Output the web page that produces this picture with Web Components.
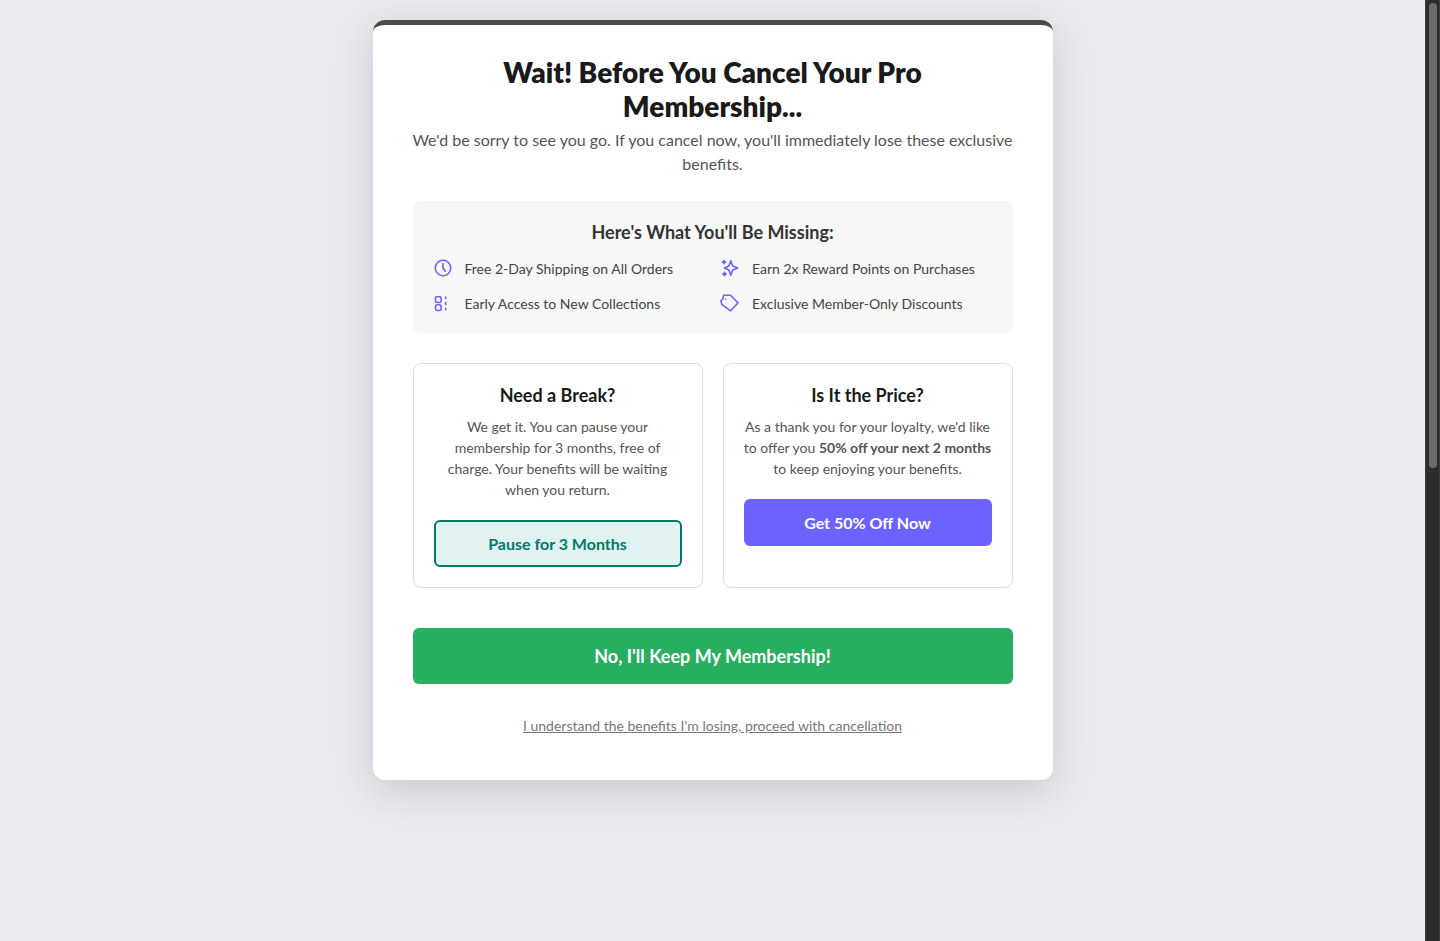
<!DOCTYPE html>
<html lang="en">
<head>
<meta charset="utf-8">
<meta name="viewport" content="width=device-width, initial-scale=1">
<title>Cancel Pro Membership</title>
<style>
  html, body { margin: 0; }
  body { background: #e9ebef; color: #4a4a4a; font-family: Lato, "Liberation Sans", sans-serif; font-size: 14px; }
</style>
</head>
<body>
<page-shell>
  <retention-dialog>
    <span slot="title">Wait! Before You Cancel Your Pro Membership...</span>
    <span slot="intro">We'd be sorry to see you go. If you cancel now, you'll immediately lose these exclusive benefits.</span>
    <benefit-panel heading="Here's What You'll Be Missing:">
      <benefit-item icon="clock">Free 2-Day Shipping on All Orders</benefit-item>
      <benefit-item icon="sparkles">Earn 2x Reward Points on Purchases</benefit-item>
      <benefit-item icon="access">Early Access to New Collections</benefit-item>
      <benefit-item icon="tag">Exclusive Member-Only Discounts</benefit-item>
    </benefit-panel>
    <offer-group>
      <offer-card heading="Need a Break?">
        We get it. You can pause your membership for 3 months, free of charge. Your benefits will be waiting when you return.
        <action-button slot="action" variant="pause">Pause for 3 Months</action-button>
      </offer-card>
      <offer-card heading="Is It the Price?">
        As a thank you for your loyalty, we'd like to offer you <strong>50% off your next 2 months</strong> to keep enjoying your benefits.
        <action-button slot="action" variant="discount">Get 50% Off Now</action-button>
      </offer-card>
    </offer-group>
    <action-button variant="keep">No, I'll Keep My Membership!</action-button>
    <cancel-link>I understand the benefits I'm losing, proceed with cancellation</cancel-link>
  </retention-dialog>
</page-shell>
<script>
  const define = (name, markup, setup) => {
    customElements.define(name, class extends HTMLElement {
      constructor() {
        super();
        const template = document.createElement('template');
        template.innerHTML = markup;
        this.attachShadow({ mode: 'open' }).append(template.content.cloneNode(true));
      }
      connectedCallback() { if (setup) setup(this, this.shadowRoot); }
    });
  };

  define('page-shell', `
    <style>
      :host { display: flex; min-height: 100vh; }
      main { flex: 1; min-width: 0; box-sizing: border-box; padding: 20px; display: flex; justify-content: center; align-items: flex-start; }
    </style>
    <main><slot></slot></main>
    <scroll-track></scroll-track>`);

  define('scroll-track', `
    <style>
      :host { display: block; box-sizing: border-box; width: 15px; height: 100vh; padding: 3px; position: sticky; top: 0; background: #2c2c2c; border: solid #3c3c3c; border-width: 0 1px; }
      div { box-sizing: border-box; width: 8px; height: calc(50% - 3px); border-radius: 4px; background: #6b6b6b; }
    </style>
    <div></div>`);

  define('retention-dialog', `
    <style>
      :host { display: block; box-sizing: border-box; width: 100%; max-width: 680px; padding: 30px 40px; text-align: center; background: #fff; border-top: 5px solid #4a4a4a; border-radius: 12px; box-shadow: 0 10px 40px rgba(0, 0, 0, 0.15); }
      h1 { margin: 0 0 5px; font-size: 28px; line-height: 34px; font-weight: 800; color: #1a1a1a; }
      p { margin: 0 -4px 25px; font-size: 16px; line-height: 24px; color: #555; }
    </style>
    <h1><slot name="title"></slot></h1>
    <p><slot name="intro"></slot></p>
    <slot></slot>`);

  define('benefit-panel', `
    <style>
      :host { display: block; padding: 20px; margin-bottom: 30px; background: #f7f7f7; border-radius: 8px; }
      h2 { margin: 0 0 15px; font-size: 18px; line-height: 22px; font-weight: 700; color: #333; }
      div { display: grid; grid-template-columns: 1fr 1fr; gap: 15px; }
    </style>
    <h2></h2>
    <div role="list"><slot></slot></div>`,
    (host, root) => { root.querySelector('h2').textContent = host.getAttribute('heading'); });

  const icons = {
    clock: '<circle cx="10" cy="10" r="7.7"/><path d="M10 5.8V10l2.4 3.2"/>',
    sparkles: '<path d="M10.8 2.8 12.7 8 17.8 10 12.7 12 10.8 17.2 8.9 12 4.5 10 8.9 8Z"/><path d="M4 2.6v3M2.5 4.1h3M4.5 14.5v3M3 16h3" stroke-width="1.9"/>',
    access: '<rect x="2.5" y="3.7" width="5.6" height="5.8" rx="1.2"/><rect x="2.5" y="11.7" width="5.6" height="5.8" rx="2"/><path d="M12.7 4v1.4M12.7 9.4v2M12.7 15.4v1.4"/>',
    tag: '<path d="M3.7 2.3H10.5L18 9.7 10.7 17.8 2 11.6 .8 8 2.8 6Z"/><path d="M5.5 6h.1"/>'
  };

  define('benefit-item', `
    <style>
      :host { display: flex; align-items: center; gap: 12px; text-align: left; line-height: 20px; color: #444; }
      svg { flex: none; width: 20px; height: 20px; fill: none; stroke: #6c63ff; stroke-width: 1.6; stroke-linecap: round; stroke-linejoin: round; overflow: visible; }
      span { padding-top: 2px; line-height: 18px; }
    </style>
    <svg viewBox="0 0 20 20" aria-hidden="true"></svg>
    <span><slot></slot></span>`,
    (host, root) => {
      host.setAttribute('role', 'listitem');
      root.querySelector('svg').innerHTML = icons[host.getAttribute('icon')];
    });

  define('offer-group', `
    <style>
      :host { display: grid; grid-template-columns: repeat(auto-fit, minmax(240px, 1fr)); gap: 20px; margin-bottom: 40px; }
    </style>
    <slot></slot>`);

  define('offer-card', `
    <style>
      :host { display: block; padding: 20px; border: 1px solid #ddd; border-radius: 8px; }
      h2 { margin: 0 0 10px; font-size: 18px; line-height: 22px; font-weight: 700; color: #1a1a1a; }
      p { margin: 0 0 20px; line-height: 21px; color: #555; }
    </style>
    <h2></h2>
    <p><slot></slot></p>
    <slot name="action"></slot>`,
    (host, root) => { root.querySelector('h2').textContent = host.getAttribute('heading'); });

  define('action-button', `
    <style>
      :host { display: block; }
      button { display: block; width: 100%; margin: 0; padding: 12px; border: 0; border-radius: 6px; font: 700 16px/23px Lato, "Liberation Sans", sans-serif; color: #fff; cursor: pointer; }
      :host([variant="pause"]) button { padding: 10px; border: 2px solid #00796b; color: #00796b; background: #e0f2f1; }
      :host([variant="discount"]) button { background: #6c63ff; }
      :host([variant="keep"]) button { padding: 16px; font-size: 18px; line-height: 24px; background: #27ae60; }
    </style>
    <button type="button"><slot></slot></button>`);

  define('cancel-link', `
    <style>
      :host { display: block; margin: 32px 0 14px; line-height: 20px; }
      a { color: #777; text-decoration: underline; }
    </style>
    <a href="#cancel"><slot></slot></a>`);
</script>
</body>
</html>
